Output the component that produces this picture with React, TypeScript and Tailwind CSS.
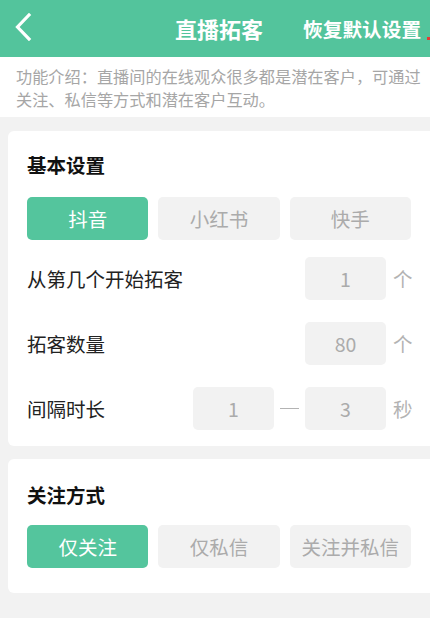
import { useState } from 'react';

const font = { fontFamily: '"Noto Sans CJK SC", "Noto Sans", sans-serif' };

function Segment({ items, active, onPick }: { items: string[]; active: number; onPick: (i: number) => void }) {
  return (
    <div className="grid grid-cols-3 gap-[10px]">
      {items.map((label, i) => (
        <button
          key={label}
          onClick={() => onPick(i)}
          className={
            i === active
              ? 'h-[43px] rounded-[5px] bg-[#54c59d] text-[19.5px] text-white'
              : 'h-[43px] rounded-[5px] bg-[#f2f2f2] text-[19.5px] text-[#ababab]'
          }
        >
          {label}
        </button>
      ))}
    </div>
  );
}

function NumBox({ value }: { value: string }) {
  return (
    <div className="flex h-[43px] w-[81px] items-center justify-center rounded-[5px] bg-[#f2f2f2] text-[19.5px] text-[#ababab]">
      {value}
    </div>
  );
}

export default function App() {
  const [platform, setPlatform] = useState(0);
  const [mode, setMode] = useState(0);

  return (
    <div className="min-h-[618px] w-[430px] overflow-hidden bg-[#f2f2f2]" style={font}>
      <header className="relative flex h-[57px] items-center bg-[#53c49c] text-white">
        <svg className="absolute left-[14px] top-[13px]" width="18" height="28" viewBox="0 0 18 28" fill="none">
          <path d="M15 2 L3.5 14 L15 26" stroke="white" strokeWidth="3.2" strokeLinecap="square" />
        </svg>
        <h1 className="ml-[175px] text-[22px] font-bold">直播拓客</h1>
        <span className="ml-[40px] text-[19.7px] font-bold">恢复默认设置</span>
        <span className="absolute right-0 top-[37px] h-[3px] w-[3px] bg-[#e53935]" />
      </header>

      <p className="bg-white pb-[6px] pl-4 pr-1 pt-[8px] text-[16.2px] leading-[23px] text-[#a6a6a6]">
        功能介绍：直播间的在线观众很多都是潜在客户，可通过关注、私信等方式和潜在客户互动。
      </p>

      <section className="ml-2 mt-[14px] rounded-l-[6px] bg-white px-[19px] pb-[16px] pt-[21px]">
        <h2 className="h-[26px] text-[19.5px] font-bold leading-[26px] text-[#111]">基本设置</h2>
        <div className="mt-[19px]">
          <Segment items={['抖音', '小红书', '快手']} active={platform} onPick={setPlatform} />
        </div>

        <div className="mt-[17px] flex items-center">
          <span className="flex-1 text-[19.5px] text-[#222]">从第几个开始拓客</span>
          <NumBox value="1" />
          <span className="ml-[7px] w-[18px] text-[19.5px] text-[#b3b3b3]">个</span>
        </div>

        <div className="mt-[22px] flex items-center">
          <span className="flex-1 text-[19.5px] text-[#222]">拓客数量</span>
          <NumBox value="80" />
          <span className="ml-[7px] w-[18px] text-[19.5px] text-[#b3b3b3]">个</span>
        </div>

        <div className="mt-[22px] flex items-center">
          <span className="flex-1 text-[19.5px] text-[#222]">间隔时长</span>
          <NumBox value="1" />
          <span className="mx-[6px] h-[1.5px] w-[19px] bg-[#b3b3b3]" />
          <NumBox value="3" />
          <span className="ml-[7px] w-[18px] text-[19.5px] text-[#b3b3b3]">秒</span>
        </div>
      </section>

      <section className="ml-2 mt-[13px] rounded-l-[6px] bg-white px-[19px] pb-[25px] pt-[23px]">
        <h2 className="h-[26px] text-[19.5px] font-bold leading-[26px] text-[#111]">关注方式</h2>
        <div className="mt-[17px]">
          <Segment items={['仅关注', '仅私信', '关注并私信']} active={mode} onPick={setMode} />
        </div>
      </section>
    </div>
  );
}
